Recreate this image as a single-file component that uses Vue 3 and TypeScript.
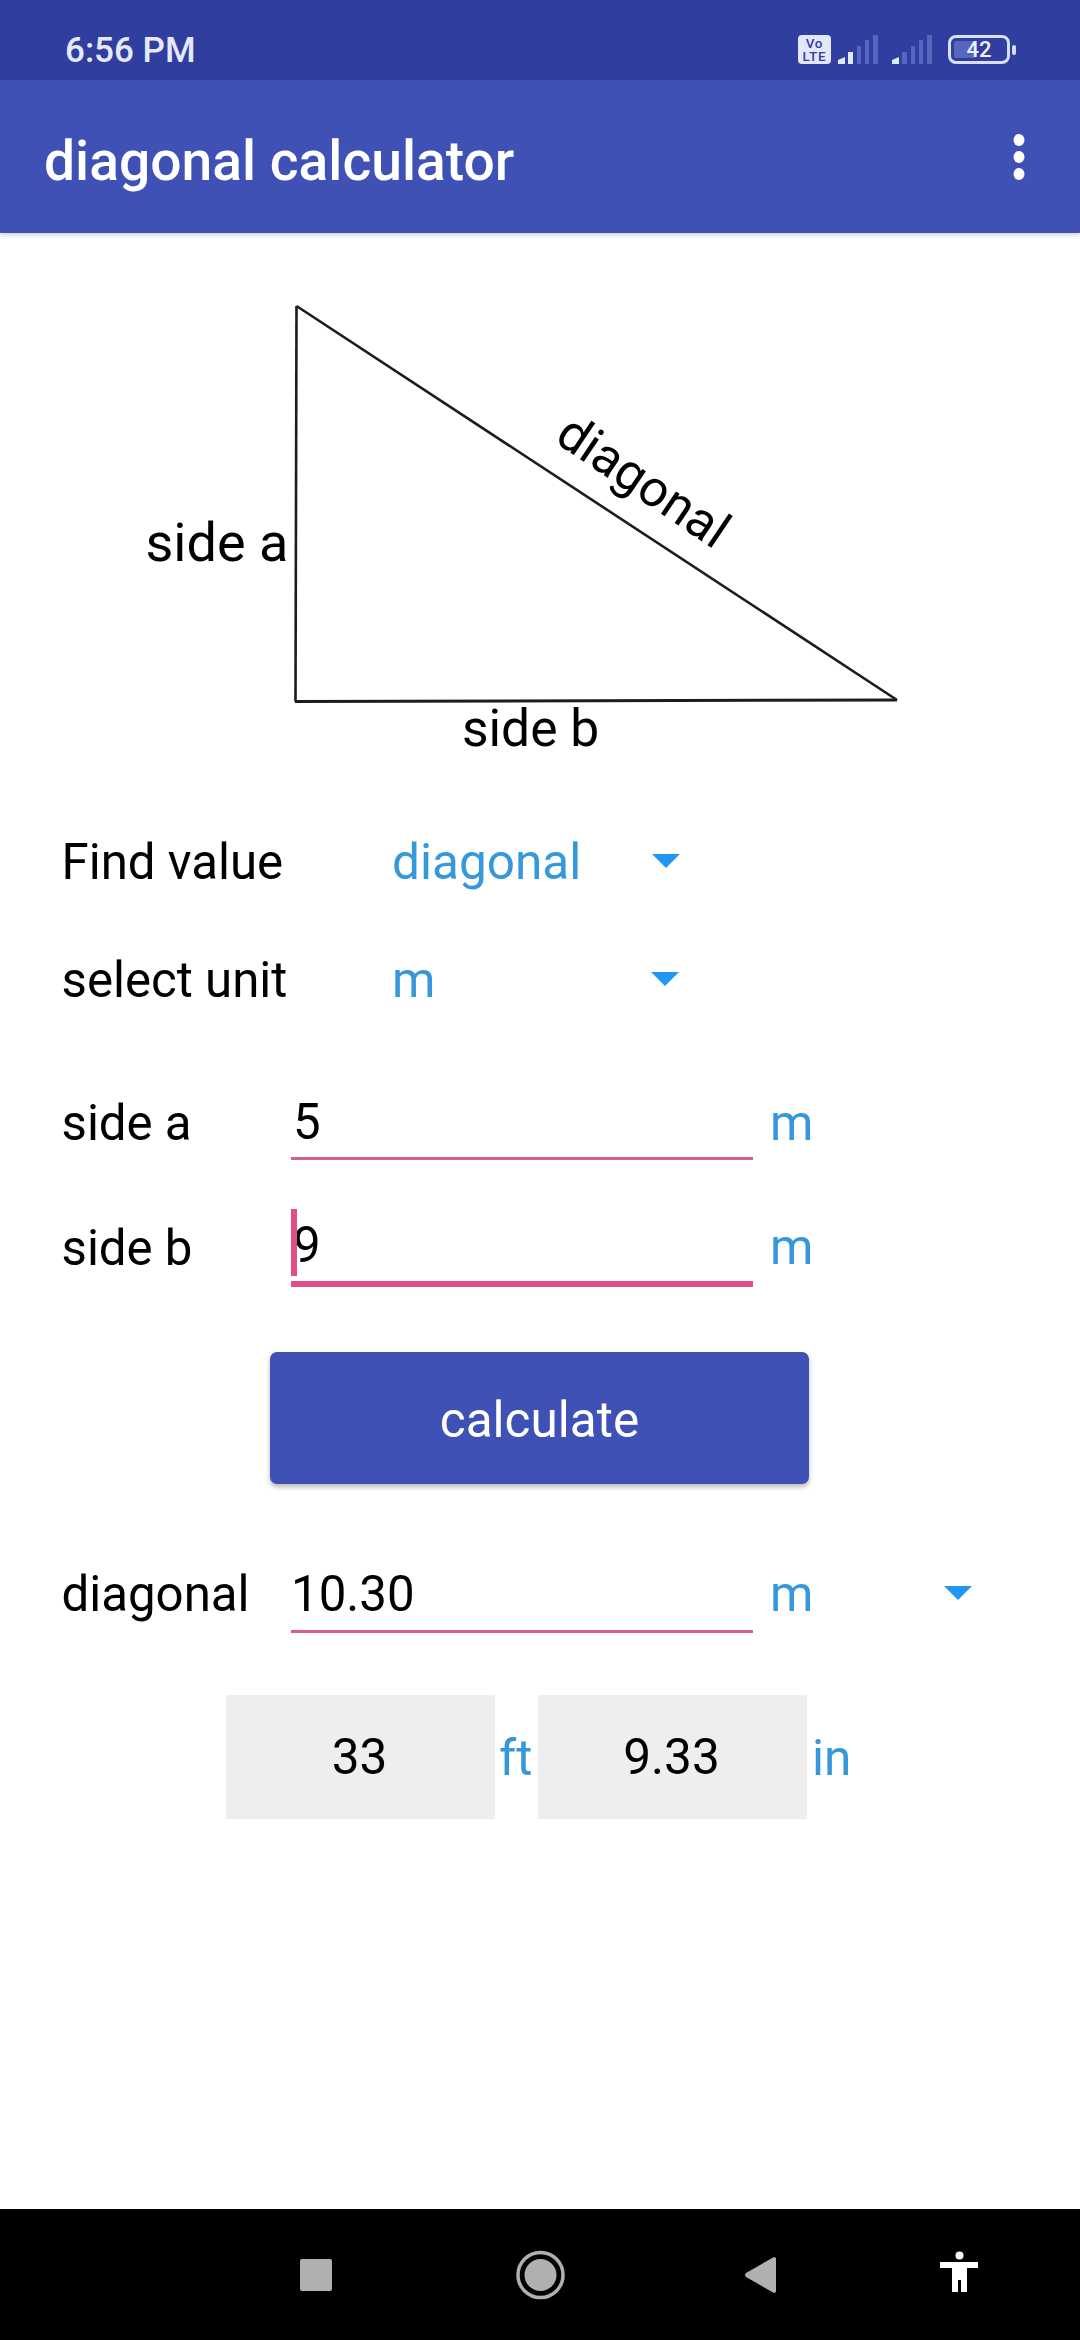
<script setup lang="ts">
const barsFirst = [
  { x: 10, y: 17, w: 5, on: true },
  { x: 19, y: 11, w: 4, on: false },
  { x: 27, y: 5, w: 4, on: false },
  { x: 35, y: 0, w: 5, on: false },
]
const barsSecond = [
  { x: 10, y: 17, w: 5 },
  { x: 19, y: 11, w: 4 },
  { x: 27, y: 5, w: 4 },
  { x: 35, y: 0, w: 5 },
]
</script>

<template>
  <div class="screen">
    <header class="status">
      <span class="time">6:56 PM</span>
      <div class="status-icons">
        <div class="volte"><span>Vo</span><span>LTE</span></div>
        <svg class="signal first" width="40" height="29" viewBox="0 0 40 29">
          <path d="M0 29 V25 L7 22 V29 Z" fill="#e3e7fa" />
          <rect v-for="b in barsFirst" :key="b.x" :x="b.x" :y="b.y" :width="b.w" :height="29 - b.y" :fill="b.on ? '#e3e7fa' : '#5766bd'" />
        </svg>
        <svg class="signal second" width="40" height="29" viewBox="0 0 40 29">
          <path d="M0 29 V25 L7 22 V29 Z" fill="#e3e7fa" />
          <rect v-for="b in barsSecond" :key="b.x" :x="b.x" :y="b.y" :width="b.w" :height="29 - b.y" fill="#5766bd" />
        </svg>
        <div class="battery">
          <div class="battery-fill"></div>
          <span class="battery-level">42</span>
        </div>
        <div class="battery-nub"></div>
      </div>
    </header>

    <div class="appbar">
      <span class="title">diagonal calculator</span>
      <svg class="menu" width="12" height="46" viewBox="0 0 12 46">
        <ellipse cx="6" cy="6" rx="5.5" ry="6" />
        <ellipse cx="6" cy="23" rx="5.5" ry="6" />
        <ellipse cx="6" cy="40" rx="5.5" ry="6" />
      </svg>
    </div>

    <main class="content">
      <svg class="diagram" width="1080" height="567" viewBox="0 233 1080 567">
        <path d="M296.5 306 L295.5 701.5" fill="none" stroke="#1c1c1c" stroke-width="2.6" />
        <path d="M295 701.5 L897 700" fill="none" stroke="#1c1c1c" stroke-width="3" />
        <path d="M296.5 306 L897 700" fill="none" stroke="#1c1c1c" stroke-width="2.6" />
        <text x="145.5" y="561" font-size="54">side a</text>
        <text x="462" y="746" font-size="51.5">side b</text>
        <text x="553" y="441" font-size="51" transform="rotate(34 553 441)">diagonal</text>
      </svg>

      <div class="row find">
        <span class="label spinner-label">Find value</span>
        <span class="accent spinner-value">diagonal</span>
        <svg class="arrow" width="28" height="14" viewBox="0 0 28 14"><path d="M0 0 H28 L14 14 Z" /></svg>
      </div>

      <div class="row select">
        <span class="label spinner-label">select unit</span>
        <span class="accent spinner-value short">m</span>
        <svg class="arrow" width="28" height="14" viewBox="0 0 28 14"><path d="M0 0 H28 L14 14 Z" /></svg>
      </div>

      <div class="row side-a">
        <span class="label field-label">side a</span>
        <div class="field">5</div>
        <span class="accent unit">m</span>
      </div>

      <div class="row side-b">
        <span class="label field-label">side b</span>
        <div class="field focused">
          <i class="caret"></i>9
        </div>
        <span class="accent unit">m</span>
      </div>

      <button class="calculate" type="button">calculate</button>

      <div class="row result">
        <span class="label field-label">diagonal</span>
        <div class="field flush">10.30</div>
        <span class="accent unit result-unit">m</span>
        <svg class="arrow" width="28" height="14" viewBox="0 0 28 14"><path d="M0 0 H28 L14 14 Z" /></svg>
      </div>

      <div class="imperial">
        <div class="box">33</div>
        <span class="accent ft">ft</span>
        <div class="box">9.33</div>
        <span class="accent in">in</span>
      </div>
    </main>

    <nav class="navbar">
      <svg width="1080" height="131" viewBox="0 2209 1080 131">
        <rect x="300" y="2259" width="32" height="32" rx="2" fill="#b0b0b0" />
        <circle cx="540.5" cy="2275" r="22.5" fill="none" stroke="#b0b0b0" stroke-width="3.5" />
        <circle cx="540.5" cy="2275" r="16" fill="#b0b0b0" />
        <path d="M776 2258 V2292 L774 2293 L746 2277 Q744 2275 746 2273 L774 2257 Z" fill="#b0b0b0" />
        <ellipse cx="959.5" cy="2255.5" rx="4" ry="4" fill="#fff" />
        <path d="M940 2262 H978 V2268 H967 V2292 H961 V2280 H958 V2292 H952 V2268 H940 Z" fill="#fff" />
      </svg>
    </nav>
  </div>
</template>

<style scoped>
.screen {
  width: 1080px;
  height: 2340px;
  display: flex;
  flex-direction: column;
  overflow: hidden;
  background: #fff;
  font-family: Roboto, "Liberation Sans", sans-serif;
  color: #000;
}
.status {
  height: 80px;
  flex: none;
  box-sizing: border-box;
  padding: 20px 64px 0 65px;
  background: #303f9f;
  display: flex;
  align-items: center;
  justify-content: space-between;
}
.time {
  font-size: 35px;
  font-weight: 500;
  color: #e6e9fb;
}
.status-icons {
  display: flex;
  align-items: center;
  margin-top: -1px;
}
.volte {
  width: 33px;
  height: 29px;
  box-sizing: border-box;
  border-radius: 4px;
  background: #e3e7fa;
  color: #303f9f;
  display: flex;
  flex-direction: column;
  align-items: center;
  justify-content: center;
  font-size: 13.5px;
  font-weight: 500;
  letter-spacing: 0.8px;
  line-height: 13px;
}
.signal.first {
  margin-left: 7px;
}
.signal.second {
  margin-left: 14px;
}
.battery {
  position: relative;
  width: 62px;
  height: 29px;
  margin-left: 16px;
  box-sizing: border-box;
  border: 3.5px solid #d9defa;
  border-radius: 8px;
  display: flex;
  align-items: center;
  justify-content: center;
}
.battery-fill {
  position: absolute;
  left: 3px;
  top: 3px;
  bottom: 3px;
  width: 22px;
  border-radius: 2px;
  background: #5766bd;
}
.battery-level {
  position: relative;
  color: #eef0fd;
  font-size: 22px;
  font-weight: 500;
  line-height: 22px;
}
.battery-nub {
  width: 4px;
  height: 10px;
  margin-left: 2px;
  border-radius: 2px;
  background: #d9defa;
}
.appbar {
  height: 153px;
  flex: none;
  box-sizing: border-box;
  padding: 0 55px 0 44px;
  background: #3f51b5;
  display: flex;
  align-items: center;
  justify-content: space-between;
  box-shadow: 0 2px 5px rgba(0, 0, 0, 0.2);
  position: relative;
}
.title {
  margin-top: 9px;
  font-size: 55.2px;
  font-weight: 500;
  color: #fff;
}
.menu {
  fill: #fff;
}
.content {
  flex: 1;
  min-height: 0;
}
.diagram {
  display: block;
  font-family: Roboto, "Liberation Sans", sans-serif;
}
.row {
  height: 58px;
  padding-left: 61.5px;
  display: flex;
  align-items: flex-start;
  font-size: 49.2px;
  line-height: 58px;
}
.label {
  flex: none;
}
.accent {
  color: #3498db;
  font-size: 49.5px;
  line-height: 58px;
}
.spinner-label {
  width: 330.5px;
}
.spinner-value {
  width: 260px;
}
.spinner-value.short {
  width: 259px;
}
.field-label {
  width: 229.5px;
}
.arrow {
  flex: none;
  margin-top: 21px;
  fill: #2196f3;
}
.find {
  margin-top: 33px;
}
.select {
  margin-top: 60px;
}
.side-a {
  margin-top: 85px;
}
.side-a .field {
  margin-top: -3px;
}
.side-b {
  margin-top: 67px;
}
.side-b .field {
  margin-top: -4px;
  padding-top: 1px;
}
.side-b .unit {
  margin-top: -1px;
}
.field {
  position: relative;
  flex: none;
  width: 462px;
  height: 69px;
  box-sizing: border-box;
  margin-top: -1px;
  padding: 2px 0 0 2px;
  border-bottom: 3px solid #d95f8b;
}
.field.focused {
  height: 72px;
  border-bottom: 6px solid #e14d86;
}
.field.flush {
  padding: 1px 0 0;
}
.caret {
  position: absolute;
  left: 0;
  top: -6px;
  width: 6px;
  height: 67px;
  background: #e14d86;
}
.unit {
  margin-left: 17px;
}
.result-unit {
  width: 174px;
  flex: none;
}
.calculate {
  display: block;
  width: 539px;
  height: 132px;
  margin: 75px 0 0 270px;
  padding: 4px 0 0;
  border: 0;
  border-radius: 7px;
  background: #3f51b5;
  color: #fff;
  font-family: inherit;
  font-size: 49.5px;
  box-shadow: 0 3px 5px rgba(0, 0, 0, 0.28);
}
.result {
  margin-top: 81px;
}
.imperial {
  margin-top: 72px;
  padding-left: 226px;
  display: flex;
  align-items: center;
}
.box {
  width: 269px;
  height: 124px;
  box-sizing: border-box;
  padding-right: 2px;
  background: #eeeeee;
  font-size: 49.5px;
  line-height: 124px;
  text-align: center;
}
.ft {
  width: 39px;
  margin-left: 4px;
  margin-top: 2px;
}
.in {
  margin-left: 5px;
  margin-top: 2px;
}
.navbar {
  height: 131px;
  flex: none;
  background: #000;
}
.navbar svg {
  display: block;
}
</style>
